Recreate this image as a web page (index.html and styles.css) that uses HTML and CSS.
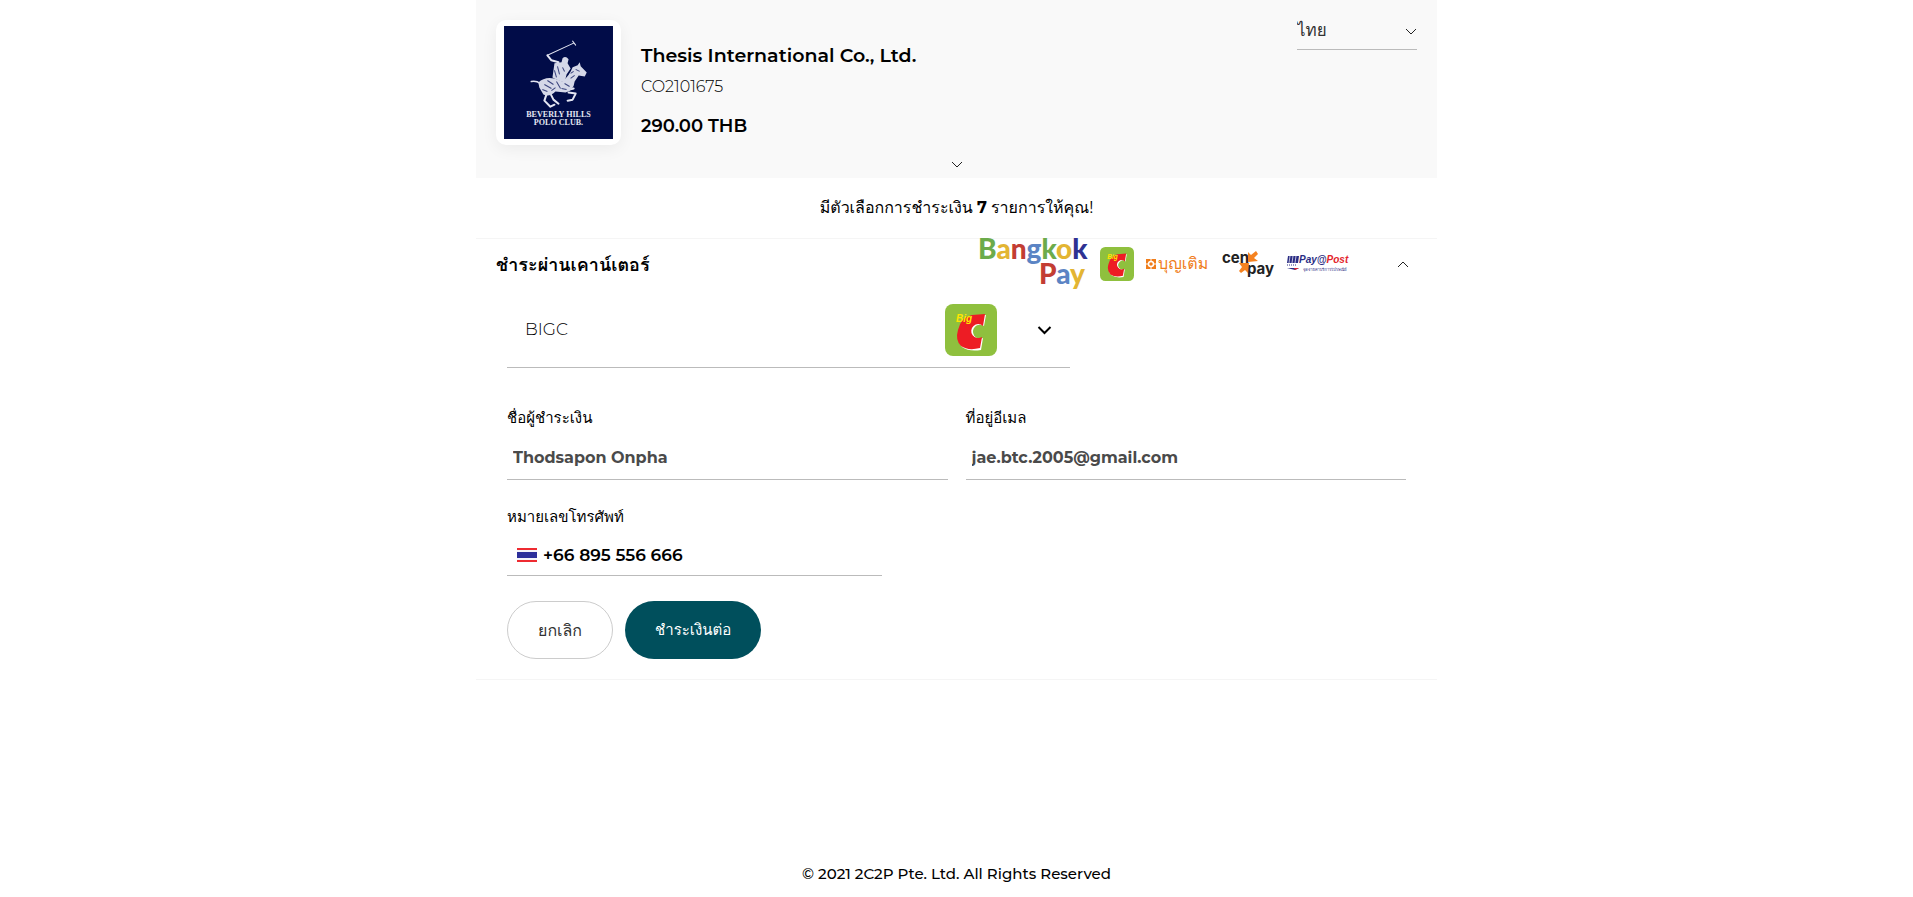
FILE: index.html
```
<!DOCTYPE html>
<html lang="th">
  <head>
    <meta charset="UTF-8" />
    <meta name="viewport" content="width=device-width, initial-scale=1.0" />
    <title>2C2P Payment</title>
    <link rel="stylesheet" href="styles.css">
  </head>
  <body>
    <!-- Big C mark, used in the channel list and in the dropdown -->
    <svg class="symbols" aria-hidden="true">
      <symbol id="bigc" viewBox="0 0 52 52">
        <rect width="52" height="52" rx="8" fill="#8fc03e" />
        <path d="M29 12 L41 11 L39 22 A7 7 0 1 0 38 34 L36 46 Q24 48 17 43 Q12 38 14 28 Q16 14 29 12 Z" fill="#fff" />
        <path d="M27 11 L40 10 L38 22 A7 7 0 1 0 37 33 L35 44 Q23 47 16 42 Q10 36 13 26 Q16 13 27 11 Z" fill="#ed1c24" />
        <text x="11" y="18" class="bigc-text">Big</text>
      </symbol>
    </svg>

    <div class="page">
      <header class="merchant">
        <div class="merchant-logo">
          <svg viewBox="0 0 108 112" role="img" aria-label="Beverly Hills Polo Club">
            <rect width="108" height="112" fill="#010c48" />
            <g fill="none" stroke="#e4e6f2" stroke-linecap="round" stroke-linejoin="round">
              <path d="M43 29 L69 17 M68 15 L71 19" stroke-width="1" />
              <path d="M43 29 L47 34 L54 36" stroke-width="2" />
              <path d="M27 55 Q32 54 36 57" stroke-width="1.5" />
              <path d="M42 68 L40 74 L46 80 L50 78 M46 67 L49 73 L54 77 M64 66 L71 67 L68 73 L63 74 M61 64 L69 62" stroke-width="2" />
            </g>
            <path d="M50 37 L57 36 L58 32 Q61 29 64 33 L63 37 L66 42 L62 48 L60 56 L54 54 L48 51 Z" fill="#d5d8e8" />
            <path d="M34 56 Q40 50 50 52 L58 55 Q65 49 68 41 L73 39 L75 36 L76 40 L82 46 L80 50 L74 49 L70 55 Q69 64 61 66 L51 65 Q45 71 39 68 L35 61 Z" fill="#d5d8e8" />
            <path d="M40 58 L47 62 M43 54 L49 58 M52 55 L56 62 M60 57 L65 60 M66 52 L70 49 M53 40 L55 48 M58 41 L60 45 M71 43 L75 45 M38 63 L43 65 M50 44 L52 51 M57 62 L62 63 M66 47 L69 45 M47 64 L51 61" stroke="#3a437d" stroke-width="1" />
            <text x="54" y="90" class="crest-text">BEVERLY HILLS</text>
            <text x="54" y="98" class="crest-text">POLO CLUB.</text>
          </svg>
        </div>
        <div class="merchant-info">
          <h1>Thesis International Co., Ltd.</h1>
          <p class="invoice">CO2101675</p>
          <p class="amount">290.00 THB</p>
        </div>
        <div class="language">
          <select aria-label="ภาษา">
            <option>ไทย</option>
          </select>
          <svg class="select-arrow" viewBox="0 0 12 7"><path d="M1 1 L6 6 L11 1" /></svg>
        </div>
        <button class="expand" type="button" aria-label="รายละเอียด">
          <svg viewBox="0 0 12 7"><path d="M1 1 L6 6 L11 1" /></svg>
        </button>
      </header>

      <main>
        <p class="options-message">มีตัวเลือกการชำระเงิน <b>7</b> รายการให้คุณ!</p>

        <section class="panel">
          <div class="panel-header">
            <h2>ชำระผ่านเคาน์เตอร์</h2>
            <div class="channels">
              <svg class="bangkok-pay" viewBox="0 0 108 54" role="img" aria-label="Bangkok Pay">
                <text x="-2" y="22"><tspan fill="#6cab4b">B</tspan><tspan fill="#e3b533">a</tspan><tspan fill="#c33d33">n</tspan><tspan fill="#5b84c4">g</tspan><tspan fill="#6cab4b">k</tspan><tspan fill="#e3b533">o</tspan><tspan fill="#2e3192">k</tspan></text>
                <text x="59" y="47"><tspan fill="#c33d33">P</tspan><tspan fill="#5b84c4">a</tspan><tspan fill="#e3b533">y</tspan></text>
              </svg>
              <svg class="bigc-logo" role="img" aria-label="Big C"><use href="#bigc" /></svg>
              <svg class="boonterm" viewBox="0 0 64 24" role="img" aria-label="บุญเติม">
                <rect x="0" y="7" width="10" height="10" fill="#f07d1a" />
                <circle cx="5" cy="12" r="2.5" fill="none" stroke="#fff" stroke-width="1.5" />
                <path d="M5 7v2M5 15v2M0 12h2M8 12h2" stroke="#fff" />
                <text x="12" y="17">บุญเติม</text>
              </svg>
              <svg class="cenpay" viewBox="0 0 52 28" role="img" aria-label="cenpay">
                <text x="0" y="13">cen</text>
                <text x="25" y="24">pay</text>
                <path d="M26 2 L29 5 L34 1 L36 4 L32 8 L36 11 L26 12 Z" fill="#f58220" />
                <path d="M17 13 L27 13 L26 23 L23 20 L19 23 L17 21 L20 17 Z" fill="#f58220" />
              </svg>
              <svg class="pay-at-post" viewBox="0 0 63 20" role="img" aria-label="Pay@Post">
                <path d="M2 2h11l-1 7H1z" fill="#2b2d84" />
                <path d="M4 2l-1 7M7 2l-1 7M10 2l-1 7" stroke="#fff" stroke-width=".7" />
                <path d="M1 11h9" stroke="#2b2d84" stroke-dasharray="1 1" />
                <path d="M1 14h12l-4 2z" fill="#2b2d84" />
                <path d="M8 14h5l-4 2z" fill="#e3242b" />
                <text x="13" y="9" class="post-name"><tspan fill="#2b2d84">Pay@</tspan><tspan fill="#e3242b">Post</tspan></text>
                <text x="17" y="17" class="post-tagline">จุดจ่ายค่าบริการไปรษณีย์</text>
              </svg>
            </div>
            <button class="collapse" type="button" aria-label="ย่อ">
              <svg viewBox="0 0 12 7"><path d="M1 6 L6 1 L11 6" /></svg>
            </button>
          </div>

          <form class="payment-form">
            <div class="channel-select">
              <select aria-label="ช่องทางชำระเงิน">
                <option>BIGC</option>
              </select>
              <svg class="channel-logo"><use href="#bigc" /></svg>
              <svg class="channel-arrow" viewBox="0 0 14 9"><path d="M1 1 L7 7 L13 1" /></svg>
            </div>

            <div class="fields">
              <div class="field">
                <label for="payer-name">ชื่อผู้ชำระเงิน</label>
                <input id="payer-name" type="text" value="Thodsapon Onpha" />
              </div>
              <div class="field">
                <label for="payer-email">ที่อยู่อีเมล</label>
                <input id="payer-email" type="email" value="jae.btc.2005@gmail.com" />
              </div>
            </div>

            <div class="field phone-field">
              <label for="payer-phone">หมายเลขโทรศัพท์</label>
              <div class="phone">
                <svg class="flag" viewBox="0 0 20 14">
                  <rect width="20" height="14" fill="#ee2b31" />
                  <rect y="2" width="20" height="10" fill="#f4f4fa" />
                  <rect y="4" width="20" height="6" fill="#2c2f9b" />
                </svg>
                <input id="payer-phone" type="tel" value="+66 895 556 666" />
              </div>
            </div>

            <div class="button-container">
              <button class="cancel-button" type="button">ยกเลิก</button>
              <button class="continue-button" type="submit">ชำระเงินต่อ</button>
            </div>
          </form>
        </section>
      </main>
    </div>

    <footer>© 2021 2C2P Pte. Ltd. All Rights Reserved</footer>
  </body>
</html>
```
FILE: styles.css
```
* {
  box-sizing: border-box;
}

body {
  margin: 0;
  min-height: 100vh;
  display: flex;
  flex-direction: column;
  font-family: Montserrat, Tahoma, Loma, Waree, "Noto Sans Thai Looped", "Noto Sans Thai", sans-serif;
  font-size: 16px;
  color: #000;
  background-color: #fff;
}

h1,
h2,
p {
  margin: 0;
}

button,
input,
select {
  font-family: inherit;
  color: inherit;
}

select {
  appearance: none;
  background: none;
  border: none;
  border-radius: 0;
}

.symbols {
  position: absolute;
  width: 0;
  height: 0;
}

.page {
  width: 100%;
  max-width: 961px;
  margin: 0 auto;
}

/* Merchant header */
.merchant {
  position: relative;
  display: flex;
  align-items: flex-start;
  padding: 20px 20px 33px;
  background-color: #f9f9f9;
}

.merchant-logo {
  width: 125px;
  height: 125px;
  padding: 6px 8px;
  background-color: #fff;
  border-radius: 10px;
  box-shadow: 0 4px 16px rgba(0, 0, 0, 0.06);
}

.merchant-logo svg {
  display: block;
  width: 100%;
  height: 100%;
}

.crest-text {
  font-family: "Liberation Serif", serif;
  font-size: 8px;
  font-weight: bold;
  text-anchor: middle;
  fill: #e4e6f2;
}

.merchant-info {
  flex: 1;
  padding: 21px 20px 0;
}

h1 {
  font-size: 19px;
  font-weight: 600;
  line-height: 30px;
}

.invoice {
  font-weight: 300;
  line-height: 32px;
}

.amount {
  margin-top: 8px;
  font-size: 18px;
  font-weight: 600;
  line-height: 30px;
}

.language {
  position: relative;
  width: 120px;
}

.language select {
  width: 100%;
  height: 30px;
  padding: 0 0 10px;
  font-size: 17px;
  font-weight: 500;
  color: #333;
  border-bottom: 1px solid #bbb;
}

.select-arrow {
  position: absolute;
  top: 8px;
  right: 0;
  width: 12px;
  height: 7px;
}

.select-arrow path,
.expand path,
.collapse path {
  fill: none;
  stroke: #222;
}

.expand {
  position: absolute;
  bottom: 6px;
  left: 50%;
  width: 24px;
  height: 16px;
  margin-left: -12px;
}

.expand,
.collapse {
  display: flex;
  align-items: center;
  justify-content: center;
  padding: 0;
  background: none;
  border: none;
  cursor: pointer;
}

.expand svg,
.collapse svg {
  width: 12px;
  height: 7px;
}

.options-message {
  line-height: 60px;
  text-align: center;
}

/* Counter payment panel */
.panel {
  border-top: 1px solid #f5f5f5;
  border-bottom: 1px solid #f5f5f5;
}

.panel-header {
  display: flex;
  align-items: center;
  height: 50px;
  padding: 0 20px;
}

h2 {
  flex: 1;
  font-size: 18px;
  font-weight: 600;
}

.channels {
  display: flex;
  align-items: center;
  gap: 12px;
}

.bangkok-pay {
  width: 108px;
  height: 54px;
  overflow: visible;
  font-family: Lato, sans-serif;
  font-size: 28px;
  font-weight: 900;
}

.bigc-logo {
  width: 34px;
  height: 34px;
}

.bigc-text {
  font-family: "Liberation Sans", sans-serif;
  font-size: 10px;
  font-weight: bold;
  font-style: italic;
  fill: #ffe600;
}

.boonterm {
  width: 64px;
  height: 24px;
  overflow: visible;
  font-size: 16px;
  font-weight: 500;
  fill: #f07d1a;
}

.cenpay {
  width: 52px;
  height: 28px;
  overflow: visible;
  font-family: Inter, sans-serif;
  font-size: 15px;
  font-weight: 700;
  fill: #222;
}

.pay-at-post {
  width: 63px;
  height: 20px;
  overflow: visible;
}

.post-name {
  font-family: "Liberation Sans", sans-serif;
  font-size: 10px;
  font-weight: bold;
  font-style: italic;
}

.post-tagline {
  font-size: 4px;
  fill: #2b2d84;
}

.collapse {
  width: 28px;
  height: 28px;
  margin-left: 40px;
}

.payment-form {
  padding: 4px 31px 20px;
}

.channel-select {
  position: relative;
  width: 563px;
  max-width: 100%;
}

.channel-select select {
  width: 100%;
  height: 75px;
  padding: 0 18px 2px;
  font-size: 17px;
  font-weight: 300;
  border-bottom: 1px solid #bbb;
}

.channel-logo {
  position: absolute;
  top: 11px;
  right: 73px;
  width: 52px;
  height: 52px;
  pointer-events: none;
}

.channel-arrow {
  position: absolute;
  top: 33px;
  right: 18px;
  width: 15px;
  height: 9px;
  pointer-events: none;
}

.channel-arrow path {
  fill: none;
  stroke: #000;
  stroke-width: 2;
}

.fields {
  display: grid;
  grid-template-columns: 1fr 1fr;
  gap: 18px;
  margin-top: 38px;
}

label {
  display: block;
  font-size: 15px;
  line-height: 24px;
}

input {
  width: 100%;
  padding: 0 6px;
  font-size: 16px;
  font-weight: 700;
  background: none;
  border: none;
}

.field > input {
  height: 50px;
  padding-top: 6px;
  color: #4a4a4a;
  border-bottom: 1px solid #bbb;
}

.phone-field {
  width: 375px;
  max-width: 100%;
  margin-top: 25px;
}

.phone {
  display: flex;
  align-items: center;
  height: 47px;
  padding: 6px 0 0 10px;
  border-bottom: 1px solid #bbb;
}

.phone input {
  font-size: 17px;
  font-weight: 600;
}

.flag {
  flex-shrink: 0;
  width: 20px;
  height: 14px;
}

.button-container {
  display: flex;
  gap: 12px;
  margin-top: 25px;
}

.button-container button {
  height: 58px;
  padding: 0 30px;
  border-radius: 29px;
  cursor: pointer;
}

.cancel-button {
  font-size: 16px;
  color: #333;
  background-color: #fff;
  border: 1px solid #ccc;
}

.continue-button {
  font-size: 15px;
  font-weight: 500;
  color: #fff;
  background-color: #004f5c;
  border: none;
}

footer {
  margin-top: auto;
  padding-bottom: 11px;
  font-size: 15px;
  font-weight: 500;
  line-height: 24px;
  text-align: center;
}
```
